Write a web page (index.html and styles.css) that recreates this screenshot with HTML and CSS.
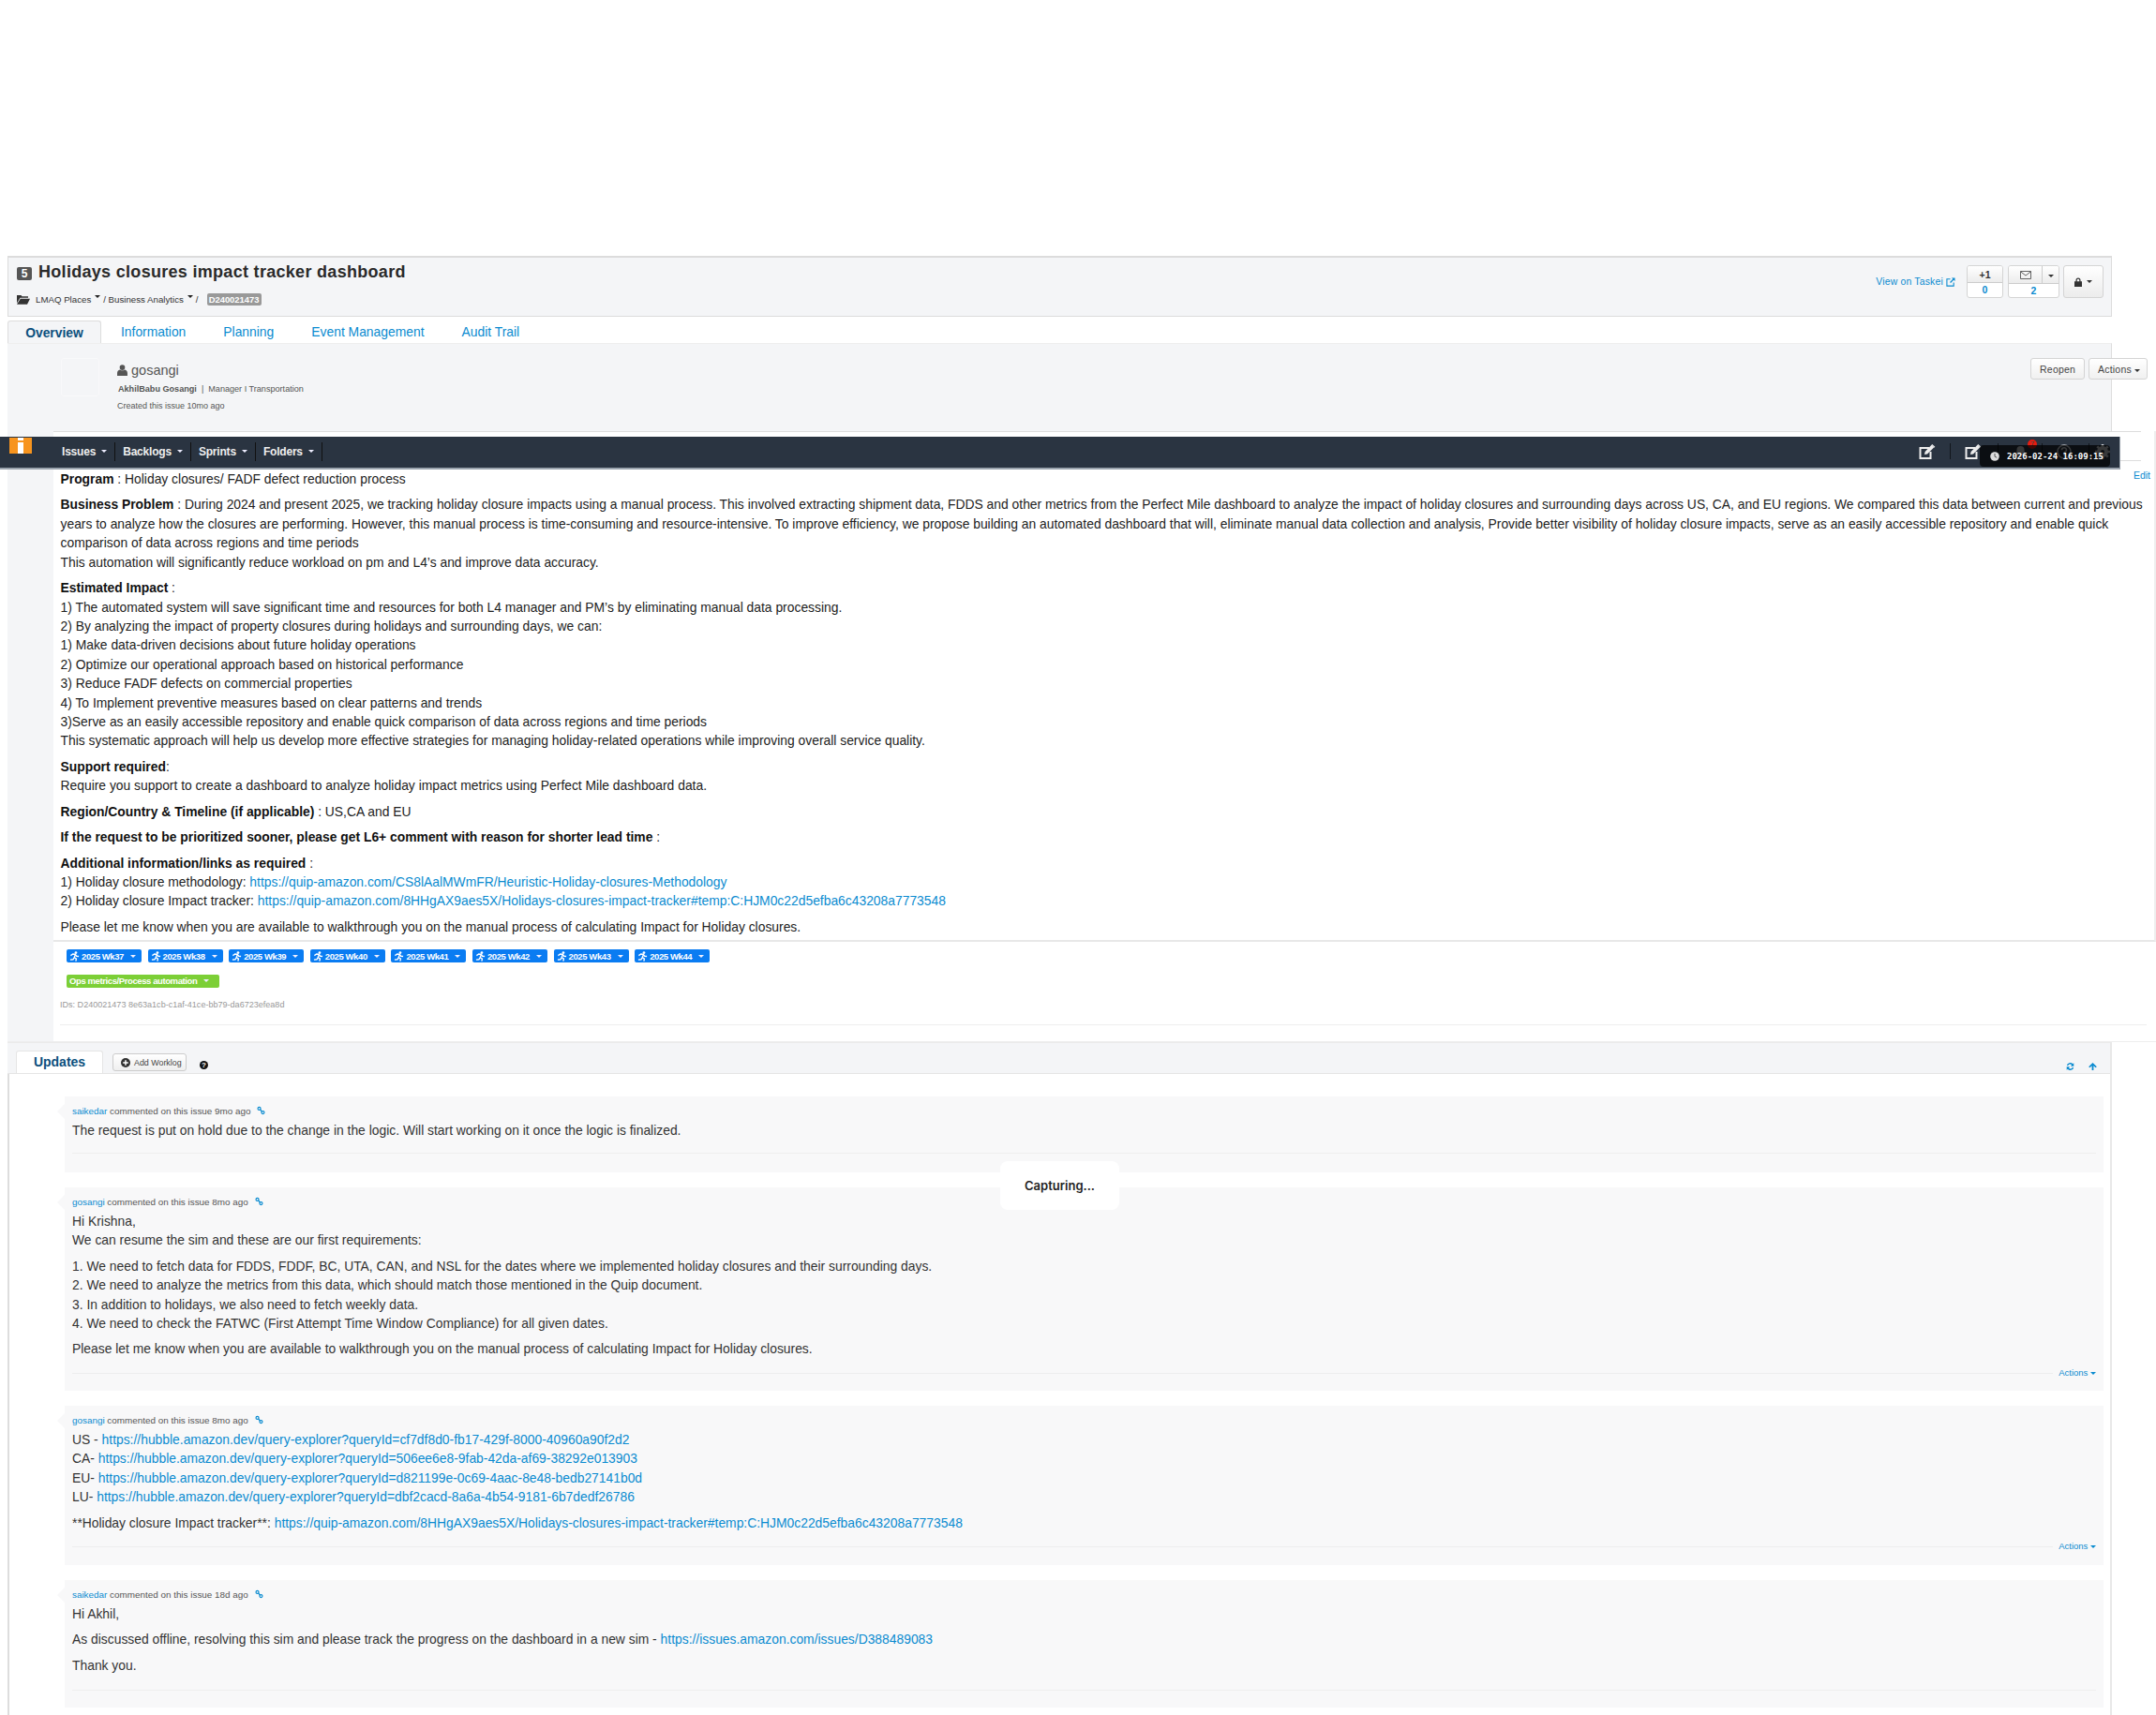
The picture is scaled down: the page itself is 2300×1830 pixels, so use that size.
FILE: index.html
```html
<!DOCTYPE html>
<html lang="en">
<head>
<meta charset="utf-8">
<title>Holidays closures impact tracker dashboard</title>
<link rel="stylesheet" href="styles.css">
</head>
<body>
<svg class="defs" width="0" height="0">
  <symbol id="run" viewBox="0 0 12 12"><circle cx="7.6" cy="1.7" r="1.5" fill="currentColor"/><path d="M1.500 5l2.600-1.700 3 .3-1.400 3.600 2.400 1.600-.6 2.700M5.600 7.600L4.300 9.600 1 10M7 4l1.400 1.700 2.600.3" fill="none" stroke="currentColor" stroke-width="1.500"/></symbol>
  <symbol id="link" viewBox="0 0 12 12"><g fill="none" stroke="currentColor" stroke-width="1.600"><circle cx="3.400" cy="3.200" r="2"/><circle cx="8.600" cy="8.800" r="2"/><path d="M4.800 4.700l2.400 2.600"/></g></symbol>
  <symbol id="edit" viewBox="0 0 18 16"><path d="M11 4H1.500v11h11V8" fill="none" stroke="currentColor" stroke-width="2"/><path d="M6 11l.6-3L13.500.8l2.600 2.600L9 10.400z" fill="currentColor"/><path d="M14.300 0l3 2.800-.9 1-3-2.800z" fill="currentColor"/></symbol>
</svg>
<div class="page">
  <header class="issue-head">
    <div class="head-main">
      <h1 class="title"><span class="num">5</span>Holidays closures impact tracker dashboard</h1>
      <div class="crumbs">
        <svg class="folder" viewBox="0 0 14 11"><path d="M0 1h4.500l1 1.300H12v1.500H3.500L0 9.500zM3.800 4.700H14l-3 6H0z" fill="currentColor"/></svg>
        <span>LMAQ Places</span><i class="caret-up"></i><span>/ Business Analytics</span><i class="caret-up"></i><span>/</span>
        <span class="id-badge">D240021473</span>
      </div>
    </div>
    <div class="head-actions">
      <a class="taskei">View on Taskei
        <svg class="ext" viewBox="0 0 11 11"><path d="M5 2H1v8h8V6" fill="none" stroke="currentColor" stroke-width="1.200"/><path d="M6.500.5h4v4L9 3 5.500 6.500l-1-1L8 2z" fill="currentColor"/></svg>
      </a>
      <div class="count-btn plus"><span class="count-top">+1</span><span class="count-num">0</span></div>
      <div class="count-btn mail">
        <span class="count-top mail-top">
          <span class="mail-icon"><svg viewBox="0 0 12 9"><path d="M.5.500h11v8H.5zM.5.800L6 5l5.500-4.200" fill="none" stroke="#555" stroke-width=".9"/></svg></span>
          <span class="mail-caret"><i class="caret dark"></i></span>
        </span>
        <span class="count-num">2</span>
      </div>
      <div class="lock-btn">
        <svg class="lock" viewBox="0 0 8 10"><path d="M1.500 4.200V3a2.500 2.500 0 015 0v1.200H8V10H0V4.200zM2.700 4.200h2.600V3a1.300 1.300 0 00-2.600 0z" fill="#333" fill-rule="evenodd"/></svg>
        <i class="caret dark"></i>
      </div>
    </div>
  </header>

  <nav class="tabs">
    <a class="tab active">Overview</a>
    <a class="tab">Information</a>
    <a class="tab">Planning</a>
    <a class="tab">Event Management</a>
    <a class="tab">Audit Trail</a>
  </nav>

  <section class="owner">
    <div class="avatar"></div>
    <div class="owner-info">
      <div class="owner-name">
        <svg class="user" viewBox="0 0 10 11"><circle cx="5" cy="2.800" r="2.600" fill="currentColor"/><path d="M0 11V8.300C0 6.300 1.500 5 2.800 5c.6.500 1.300.8 2.200.8S6.600 5.500 7.200 5C8.500 5 10 6.300 10 8.300V11z" fill="currentColor"/></svg>
        gosangi
      </div>
      <div class="owner-role"><b>AkhilBabu Gosangi</b><span class="pipe">|</span>Manager I Transportation</div>
      <div class="owner-created">Created this issue 10mo ago</div>
    </div>
    <div class="owner-btns">
      <span class="btn">Reopen</span>
      <span class="btn narrow">Actions <i class="caret dark"></i></span>
    </div>
  </section>

  <div class="desc-row">
    <div class="gutter"></div>
    <div class="desc">
      <div class="desc-tabbar"></div>
      <a class="edit">Edit</a>
      <div class="desc-body">
        <p><b>Program</b> : Holiday closures/ FADF defect reduction process</p>
        <p><b>Business Problem</b> : During 2024 and present 2025, we tracking holiday closure impacts using a manual process. This involved extracting shipment data, FDDS and other metrics from the Perfect Mile dashboard to analyze the impact of holiday closures and surrounding days across US, CA, and EU regions. We compared this data between current and previous years to analyze how the closures are performing. However, this manual process is time-consuming and resource-intensive. To improve efficiency, we propose building an automated dashboard that will, eliminate manual data collection and analysis, Provide better visibility of holiday closure impacts, serve as an easily accessible repository and enable quick comparison of data across regions and time periods<br>This automation will significantly reduce workload on pm and L4’s and improve data accuracy.</p>
        <p><b>Estimated Impact</b> :<br>1) The automated system will save significant time and resources for both L4 manager and PM’s by eliminating manual data processing.<br>2) By analyzing the impact of property closures during holidays and surrounding days, we can:<br>1) Make data-driven decisions about future holiday operations<br>2) Optimize our operational approach based on historical performance<br>3) Reduce FADF defects on commercial properties<br>4) To Implement preventive measures based on clear patterns and trends<br>3)Serve as an easily accessible repository and enable quick comparison of data across regions and time periods<br>This systematic approach will help us develop more effective strategies for managing holiday-related operations while improving overall service quality.</p>
        <p><b>Support required</b>:<br>Require you support to create a dashboard to analyze holiday impact metrics using Perfect Mile dashboard data.</p>
        <p><b>Region/Country &amp; Timeline (if applicable)</b> : US,CA and EU</p>
        <p><b>If the request to be prioritized sooner, please get L6+ comment with reason for shorter lead time</b> :</p>
        <p><b>Additional information/links as required</b> :<br>1) Holiday closure methodology: <a>https://quip-amazon.com/CS8lAalMWmFR/Heuristic-Holiday-closures-Methodology</a><br>2) Holiday closure Impact tracker: <a>https://quip-amazon.com/8HHgAX9aes5X/Holidays-closures-impact-tracker#temp:C:HJM0c22d5efba6c43208a7773548</a></p>
        <p><span>Please let me know when you are available to walkthrough you on the manual process of calculating Impact for Holiday closures.</span></p>
      </div>
      <div class="tags-area">
        <div class="tag-row">
          <span class="tag"><svg class="run"><use href="#run"/></svg>2025 Wk37<i class="caret light"></i></span>
          <span class="tag"><svg class="run"><use href="#run"/></svg>2025 Wk38<i class="caret light"></i></span>
          <span class="tag"><svg class="run"><use href="#run"/></svg>2025 Wk39<i class="caret light"></i></span>
          <span class="tag"><svg class="run"><use href="#run"/></svg>2025 Wk40<i class="caret light"></i></span>
          <span class="tag"><svg class="run"><use href="#run"/></svg>2025 Wk41<i class="caret light"></i></span>
          <span class="tag"><svg class="run"><use href="#run"/></svg>2025 Wk42<i class="caret light"></i></span>
          <span class="tag"><svg class="run"><use href="#run"/></svg>2025 Wk43<i class="caret light"></i></span>
          <span class="tag"><svg class="run"><use href="#run"/></svg>2025 Wk44<i class="caret light"></i></span>
        </div>
        <div class="tag-row">
          <span class="tag green">Ops metrics/Process automation<i class="caret light"></i></span>
        </div>
        <div class="ids">IDs: D240021473 8e63a1cb-c1af-41ce-bb79-da6723efea8d</div>
        <div class="ids-rule"></div>
      </div>
    </div>
  </div>

  <section class="updates">
    <div class="updates-bar">
      <span class="updates-tab">Updates</span>
      <span class="worklog-btn">
        <svg class="plus-c" viewBox="0 0 10 10"><circle cx="5" cy="5" r="5" fill="#333"/><path d="M5 2.200v5.600M2.200 5h5.600" stroke="#fff" stroke-width="1.500"/></svg>
        Add Worklog
      </span>
      <span class="help">?</span>
      <span class="bar-icons">
        <svg class="bar-icon" viewBox="0 0 10 10"><path d="M1 4a4 4 0 017-2l1.200-1.200V4.600H5.400L6.800 3.200A2.500 2.500 0 002.500 4zM9 6a4 4 0 01-7 2L.8 9.200V5.400h3.800L3.200 6.800A2.500 2.500 0 007.500 6z" fill="currentColor"/></svg>
        <svg class="bar-icon" viewBox="0 0 10 10"><path d="M5 .5L9.800 5.300 8.500 6.500 6 4.200V9.500H4V4.200L1.500 6.500.2 5.300z" fill="currentColor"/></svg>
      </span>
    </div>
    <div class="comments">
      <article class="comment c1">
        <div class="meta"><a>saikedar</a> commented on this issue 9mo ago<svg class="link"><use href="#link"/></svg></div>
        <div class="comment-body"><p>The request is put on hold due to the change in the logic. Will start working on it once the logic is finalized.</p></div>
        <div class="comment-foot"></div>
      </article>
      <article class="comment c2">
        <div class="meta"><a>gosangi</a> commented on this issue 8mo ago<svg class="link"><use href="#link"/></svg></div>
        <div class="comment-body">
          <p>Hi Krishna,<br>We can resume the sim and these are our first requirements:</p>
          <p>1. We need to fetch data for FDDS, FDDF, BC, UTA, CAN, and NSL for the dates where we implemented holiday closures and their surrounding days.<br>2. We need to analyze the metrics from this data, which should match those mentioned in the Quip document.<br>3. In addition to holidays, we also need to fetch weekly data.<br>4. We need to check the FATWC (First Attempt Time Window Compliance) for all given dates.</p>
          <p>Please let me know when you are available to walkthrough you on the manual process of calculating Impact for Holiday closures.</p>
        </div>
        <div class="comment-foot"><a class="foot-action">Actions <i class="caret blue"></i></a></div>
      </article>
      <article class="comment c3">
        <div class="meta"><a>gosangi</a> commented on this issue 8mo ago<svg class="link"><use href="#link"/></svg></div>
        <div class="comment-body">
          <p>US - <a>https://hubble.amazon.dev/query-explorer?queryId=cf7df8d0-fb17-429f-8000-40960a90f2d2</a><br>CA- <a>https://hubble.amazon.dev/query-explorer?queryId=506ee6e8-9fab-42da-af69-38292e013903</a><br>EU- <a>https://hubble.amazon.dev/query-explorer?queryId=d821199e-0c69-4aac-8e48-bedb27141b0d</a><br>LU- <a>https://hubble.amazon.dev/query-explorer?queryId=dbf2cacd-8a6a-4b54-9181-6b7dedf26786</a></p>
          <p>**Holiday closure Impact tracker**: <a>https://quip-amazon.com/8HHgAX9aes5X/Holidays-closures-impact-tracker#temp:C:HJM0c22d5efba6c43208a7773548</a></p>
        </div>
        <div class="comment-foot"><a class="foot-action">Actions <i class="caret blue"></i></a></div>
      </article>
      <article class="comment c4">
        <div class="meta"><a>saikedar</a> commented on this issue 18d ago<svg class="link"><use href="#link"/></svg></div>
        <div class="comment-body">
          <p>Hi Akhil,</p>
          <p>As discussed offline, resolving this sim and please track the progress on the dashboard in a new sim - <a>https://issues.amazon.com/issues/D388489083</a></p>
          <p>Thank you.</p>
        </div>
        <div class="comment-foot"></div>
      </article>
    </div>
  </section>

  <div class="topbar">
    <span class="logo"><span class="logo-dot"></span><span class="logo-stem"></span></span>
    <div class="menu">
      <span class="menu-item">Issues<i class="caret light"></i></span>
      <span class="menu-item">Backlogs<i class="caret light"></i></span>
      <span class="menu-item">Sprints<i class="caret light"></i></span>
      <span class="menu-item">Folders<i class="caret light"></i></span>
    </div>
    <div class="top-right">
      <svg class="top-edit"><use href="#edit"/></svg>
      <span class="top-sep s1"></span>
      <svg class="top-edit"><use href="#edit"/></svg>
      <span class="top-sep s2"></span>
      <svg class="top-glyph" viewBox="0 0 12 14"><path d="M6 1a4 4 0 00-4 4c0 4-2 5-2 6h12c0-1-2-2-2-6a4 4 0 00-4-4zM4.500 12a1.500 1.500 0 003 0z" fill="currentColor"/></svg>
      <span class="top-sep s3"></span>
      <svg class="top-glyph wide" viewBox="0 0 16 16"><circle cx="8" cy="8" r="7" fill="none" stroke="currentColor" stroke-width="1.600"/><path d="M5.500 6.300a2.500 2.500 0 115 0c0 1.500-2.500 1.700-2.500 3.400M8 11v1.500" fill="none" stroke="currentColor" stroke-width="1.600"/></svg>
      <span class="top-sep s4"></span>
      <svg class="top-glyph wide" viewBox="0 0 16 16"><circle cx="8" cy="8" r="4" fill="none" stroke="currentColor" stroke-width="4"/><path d="M8 0v3M8 13v3M0 8h3M13 8h3M2.300 2.300l2 2M11.700 11.700l2 2M2.300 13.700l2-2M11.700 4.300l2-2" stroke="currentColor" stroke-width="2.600"/></svg>
    </div>
    <span class="red-badge">7</span>
    <div class="clock-pill">
      <svg class="clock" viewBox="0 0 10 10"><circle cx="5" cy="5" r="4.800" fill="#ddd"/><path d="M5 2v3.200l2.200 1" fill="none" stroke="#555" stroke-width="1"/></svg>
      <span>2026-02-24 16:09:15</span>
    </div>
  </div>

  <div class="toast">Capturing...</div>
</div>
</body>
</html>
```

FILE: styles.css
```css
* { box-sizing: border-box; }
html, body { margin: 0; padding: 0; background: #fff; }
body { font-family: "Liberation Sans", Arial, sans-serif; font-size: 14px; color: #333; }
.defs { position: absolute; }
a { color: #0a8bd0; text-decoration: none; }
p { margin: 0; }

.page { position: relative; width: 2300px; height: 1830px; padding-top: 273px; padding-left: 8px; overflow: hidden; }

.caret, .caret-up { display: inline-block; width: 0; height: 0; border-left: 3px solid transparent; border-right: 3px solid transparent; }
.caret { border-top: 3px solid #333; vertical-align: middle; }
.caret.light { border-top-color: #eef; }
.caret.blue { border-top-color: #0a8bd0; }
.caret-up { border-top: 3px solid #222; vertical-align: 6px; margin: -3px 3px 3px 4px; }

/* header */
.issue-head { width: 2245px; height: 65px; background: #f4f5f7; border: 1px solid #dcdcdc; border-top-width: 2px; display: flex; justify-content: space-between; }
.head-main { padding-left: 9px; }
.title { margin: 4px 0 0; display: flex; align-items: center; font-size: 18px; line-height: 22px; font-weight: bold; color: #2a2a2a; letter-spacing: .3px; }
.num { width: 16px; height: 14px; margin: 3px 7px 0 0; border-radius: 2px; background: #555; color: #fff; font-size: 12px; line-height: 15px; text-align: center; letter-spacing: 0; }
.crumbs { display: flex; align-items: center; margin-top: 11px; height: 15px; font-size: 9.700px; color: #333; }
.folder { width: 14px; height: 11px; margin-right: 6px; color: #333; }
.id-badge { margin-left: 9px; padding: 0 2px; width: 58px; height: 13px; line-height: 13px; background: #999; color: #fff; font-size: 9.400px; font-weight: bold; border-radius: 2px; text-align: center; white-space: nowrap; }
.head-actions { display: flex; align-items: flex-start; padding: 8px 8px 0 0; }
.taskei { margin: 12px 12px 0 0; font-size: 10.400px; letter-spacing: .2px; display: flex; align-items: center; gap: 3px; }
.ext { width: 10px; height: 10px; }
.count-btn { display: flex; flex-direction: column; height: 35px; border: 1px solid #d4d4d4; border-radius: 3px; background: #fff; margin-right: 5px; font-size: 10.500px; text-align: center; overflow: hidden; }
.plus { width: 39px; }
.mail { width: 55px; margin-right: 4px; }
.count-top { height: 18px; line-height: 18px; background: linear-gradient(#fff, #ececec); border-bottom: 1px solid #ccc; color: #333; font-weight: bold; }
.mail-top { display: flex; height: 19px; }
.mail-icon { width: 36px; border-right: 1px solid #ccc; display: flex; align-items: center; justify-content: center; }
.mail-icon svg { width: 12px; height: 9px; }
.mail-caret { flex: 1; }
.count-num { color: #0a8bd0; font-weight: bold; line-height: 15px; }
.lock-btn { width: 43px; height: 35px; border: 1px solid #d4d4d4; border-radius: 3px; background: linear-gradient(#fff, #ececec); display: flex; align-items: center; justify-content: center; gap: 5px; }
.lock { width: 8px; height: 10px; }

/* tabs */
.tabs { display: flex; width: 2245px; height: 24px; margin-top: 4px; }
.tab { padding: 0 20px; line-height: 24px; font-size: 13.860px; color: #0a8bd0; }
.tab:first-child { width: 100px; padding: 0; margin-right: 1px; text-align: center; }
.tab.active { background: #f4f5f7; border: 1px solid #ddd; border-bottom: 0; border-radius: 3px 3px 0 0; color: #0b4f7d; font-weight: bold; }

/* owner */
.owner { position: relative; display: flex; width: 2245px; height: 94px; background: #f4f5f7; border-top: 1px solid #eee; border-right: 1px solid #ddd; padding: 15px 0 0 57px; }
.avatar { width: 41px; height: 41px; border: 1px solid #f9f9fa; border-radius: 3px; }
.owner-info { margin-left: 19px; }
.owner-name { display: flex; align-items: center; gap: 4px; height: 26px; font-size: 14.500px; color: #555; }
.user { width: 11px; height: 12px; color: #555; }
.owner-role { margin-top: 0; height: 14px; line-height: 14px; font-size: 9.100px; color: #555; padding-left: 1px; }
.pipe { margin: 0 5px; }
.owner-created { margin-top: 5px; font-size: 9px; line-height: 12px; color: #555; }
.owner-btns { margin-left: auto; margin-right: -39px; display: flex; gap: 4px; }
.btn { height: 23px; padding: 0 9px; line-height: 22px; font-size: 10.500px; letter-spacing: .2px; color: #444; background: linear-gradient(#fff, #f0f0f0); border: 1px solid #d4d4d4; border-radius: 3px; }
.btn.narrow { padding: 0 7px 0 9px; }

/* description */
.desc-row { display: flex; width: 2292px; height: 652px; border-bottom: 1px solid #eee; }
.gutter { width: 49px; background: #f4f5f7; }
.desc { position: relative; flex: 1; background: #fff; border-right: 2px solid #eee; border-bottom: 2px solid #e8e8e8; height: 545px; }
.desc-tabbar { height: 32px; margin-right: 14px; border-top: 1px solid #ddd; border-bottom: 1px solid #ddd; }
.edit { position: absolute; top: 41px; right: 4px; font-size: 10.500px; }
.desc-body { padding: 9px 6px 0 7.500px; line-height: 20.420px; font-size: 13.860px; color: #222; }
.desc-body p { margin-bottom: 7px; }
.desc-body b { color: #111; }
.tags-area { margin: 0; padding: 9px 0 0 14px; position: absolute; left: 0; right: 0; top: 544px; }
.tag-row { display: flex; gap: 6.600px; height: 14px; margin-bottom: 12.500px; }
.tag { display: flex; align-items: center; height: 14px; padding-left: 3px; background: #0a7cf2; color: #fff; font-size: 9.500px; letter-spacing: -.4px; font-weight: bold; border-radius: 2px; width: 80px; white-space: nowrap; }
.tag .caret { margin-left: 7px; }
.tag.green { width: 163px; background: #7ccf36; }
.run { width: 11px; height: 11px; margin-right: 2px; color: #fff; }
.ids { margin: 0 0 0 -7px; font-size: 9.050px; line-height: 12px; color: #999; }
.ids-rule { margin: 15px 8px 0 -7px; border-top: 1px solid #eee; }

/* updates */
.updates { width: 2245px; height: 718px; border-left: 2px solid #ddd; border-right: 2px solid #e8e8e8; }
.updates-bar { display: flex; align-items: flex-end; position: relative; height: 34px; margin-left: -2px; background: #f4f5f7; border-top: 1px solid #eaeaea; border-bottom: 1px solid #e5e5e5; padding-left: 9px; }
.updates-tab { width: 93px; height: 24px; line-height: 22px; text-align: center; background: #fff; border: 1px solid #e5e5e5; border-bottom: 0; border-radius: 3px 3px 0 0; color: #0b4f7d; font-weight: bold; font-size: 14px; }
.worklog-btn { display: flex; align-items: center; gap: 4px; width: 79px; height: 19px; margin: 0 0 2px 10px; padding-left: 8px; font-size: 8.900px; color: #444; background: linear-gradient(#fff, #efefef); border: 1px solid #ccc; border-radius: 3px; white-space: nowrap; }
.plus-c { width: 10px; height: 10px; }
.help { width: 9px; height: 9px; margin: 0 0 4px 14px; border-radius: 50%; background: #111; color: #fff; font-size: 8px; font-weight: bold; line-height: 9px; text-align: center; }
.bar-icons { margin-left: auto; margin-right: 14px; margin-bottom: 2px; display: flex; gap: 15px; color: #0a8bd0; }
.bar-icon { width: 9px; height: 10px; }

.comments { padding: 24px 7px 0 59px; }
.comment { position: relative; background: #f8f8f9; padding: 9px 8px 0; margin-bottom: 16px; }
.comment::before { content: ""; position: absolute; left: -8px; top: 8px; border: 8px solid transparent; border-left: 0; border-right-color: #f8f8f9; }
.c1 { height: 81px; }
.c2 { height: 217px; }
.c3 { height: 170px; }
.c4 { height: 136px; }
.meta { height: 14px; line-height: 14px; font-size: 9.900px; color: #555; }
.meta a { color: #0a8bd0; }
.link { width: 9px; height: 10px; margin-left: 7px; color: #0a8bd0; vertical-align: -1px; }
.comment-body { margin-top: 3px; line-height: 20.400px; font-size: 13.860px; color: #333; }
.comment-body p { margin-bottom: 7px; }
.comment-foot { position: relative; margin-top: 15px; border-top: 1px solid #eee; height: 1px; }
.c1 .comment-foot { margin-top: 14px; }
.c4 .comment-foot { margin-top: 16px; }
.foot-action { position: absolute; right: 0; top: -7px; padding-left: 6px; background: #f8f8f9; font-size: 9.500px; line-height: 12px; }

/* top bar */
.topbar { position: absolute; left: 0; top: 466px; width: 2262px; height: 35px; display: flex; align-items: center; background: #2a3441; border-right: 1px solid #9aa3ad; border-bottom: 2px solid #9aa3ad; color: #eee; }
.logo { position: absolute; left: 10px; top: 1px; width: 24px; height: 17px; background: #f7941e; display: block; }
.logo-dot { position: absolute; left: 9px; top: 0; width: 6px; height: 3px; background: #fff; }
.logo-stem { position: absolute; left: 9px; top: 5px; width: 6px; height: 12px; background: #fff; }
.menu { display: flex; margin: 0 0 2px 66px; font-size: 12px; font-weight: bold; }
.menu-item { display: flex; align-items: center; height: 20px; padding-right: 8px; margin-right: 8px; border-right: 1px solid #111; color: #eee; letter-spacing: -.2px; }
.menu-item .caret { margin-left: 6px; }
.top-right { margin: 0 0 2px auto; display: flex; align-items: center; padding-right: 10px; }
.top-edit { width: 18px; height: 16px; color: #eee; }
.top-sep { width: 1px; height: 17px; background: #11161c; }
.top-sep.s1 { margin: 0 15px; }
.top-sep.s2 { margin: 0 17px; }
.top-sep.s3 { margin: 0 15px 0 16px; }
.top-sep.s4 { margin: 0 6px 0 18px; }
.top-glyph { width: 13px; height: 14px; color: #c4c8ce; }
.top-glyph.wide { width: 16px; height: 16px; }
.red-badge { position: absolute; left: 2163px; top: 3px; width: 10px; height: 10px; border-radius: 50%; background: #e81c10; color: #444; font-size: 8px; line-height: 10px; text-align: center; }
.clock-pill { position: absolute; left: 2112px; top: 9px; width: 139px; height: 23px; display: flex; align-items: center; gap: 8px; padding-left: 11px; background: rgba(0, 0, 0, .72); border-radius: 4px; color: #fff; font-family: "DejaVu Sans Mono", monospace; font-size: 9px; font-weight: bold; }
.clock { width: 10px; height: 10px; }

/* toast */
.toast { position: absolute; left: 1067px; top: 1239px; width: 127px; height: 52px; display: flex; align-items: center; justify-content: center; background: #fff; border-radius: 8px; color: #222; font-family: "Inter", sans-serif; font-size: 13px; font-weight: 600; }
```
